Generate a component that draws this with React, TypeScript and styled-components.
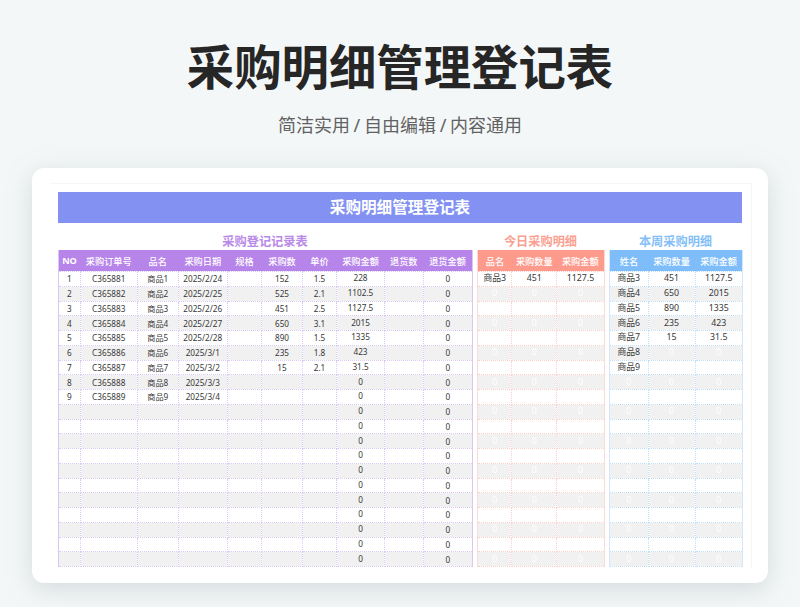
import React from "react";
import styled, { createGlobalStyle } from "styled-components";

const FONT = `"Noto Sans", "Noto Sans CJK SC", sans-serif`;

type Tint = { head: string; title: string; line: string; edge: string };

const PURPLE: Tint = { head: "#b784ea", title: "#b98ae8", line: "#dccbf5", edge: "#d9c8f3" };
const RED: Tint = { head: "#fe9a8c", title: "#fb9f92", line: "#fbd0ca", edge: "#fcdad6" };
const BLUE: Tint = { head: "#7ebdfa", title: "#85bff7", line: "#c2dff8", edge: "#d5e7f9" };

const ROW_COUNT = 20;

const purchases = [
  ["1", "C365881", "商品1", "2025/2/24", "", "152", "1.5", "228", "", "0"],
  ["2", "C365882", "商品2", "2025/2/25", "", "525", "2.1", "1102.5", "", "0"],
  ["3", "C365883", "商品3", "2025/2/26", "", "451", "2.5", "1127.5", "", "0"],
  ["4", "C365884", "商品4", "2025/2/27", "", "650", "3.1", "2015", "", "0"],
  ["5", "C365885", "商品5", "2025/2/28", "", "890", "1.5", "1335", "", "0"],
  ["6", "C365886", "商品6", "2025/3/1", "", "235", "1.8", "423", "", "0"],
  ["7", "C365887", "商品7", "2025/3/2", "", "15", "2.1", "31.5", "", "0"],
  ["8", "C365888", "商品8", "2025/3/3", "", "", "", "0", "", "0"],
  ["9", "C365889", "商品9", "2025/3/4", "", "", "", "0", "", "0"],
];

const today = [["商品3", "451", "1127.5"]];

const week = [
  ["商品3", "451", "1127.5"],
  ["商品4", "650", "2015"],
  ["商品5", "890", "1335"],
  ["商品6", "235", "423"],
  ["商品7", "15", "31.5"],
  ["商品8", "0", "0"],
  ["商品9", "0", "0"],
];

const GlobalStyle = createGlobalStyle`
  html, body {
    margin: 0;
    padding: 0;
    background: #f4f7f8;
  }
  body {
    font-family: ${FONT};
  }
`;

const Page = styled.div`
  width: 800px;
  height: 607px;
  overflow: hidden;
  display: flex;
  flex-direction: column;
  align-items: center;
`;

const Heading = styled.h1`
  margin: 33px 0 0;
  height: 68px;
  font-size: 47.4px;
  line-height: 68px;
  font-weight: 700;
  color: #262626;
`;

const Subheading = styled.div`
  margin-top: 10px;
  height: 28px;
  font-size: 18px;
  line-height: 28px;
  word-spacing: -1px;
  color: #626262;
`;

const Card = styled.div`
  margin-top: 29px;
  box-sizing: border-box;
  width: 736px;
  height: 415px;
  padding: 15px 16px 15px 18px;
  background: #fff;
  border-radius: 12px;
  box-shadow: 0 6px 24px rgba(150, 165, 165, 0.35);
`;

const Sheet = styled.div`
  box-sizing: border-box;
  height: 385px;
  padding: 8px 9px 0 8px;
  border-top: 1px solid #f6f6f6;
  border-right: 1px solid #f6f6f6;
`;

const Banner = styled.div`
  height: 31px;
  background: #8291f2;
  color: #fff;
  font-size: 15.6px;
  line-height: 31px;
  font-weight: 700;
  text-align: center;
`;

const Tables = styled.div`
  display: flex;
  justify-content: space-between;
`;

const Panel = styled.section<{ $width: number }>`
  width: ${(p) => p.$width}px;
`;

const PanelTitle = styled.div<{ $color: string }>`
  height: 27px;
  padding-top: 11px;
  box-sizing: border-box;
  font-size: 12.2px;
  line-height: 16px;
  font-weight: 700;
  text-align: center;
  color: ${(p) => p.$color};
`;

const Table = styled.table<{ $edge: string }>`
  width: 100%;
  table-layout: fixed;
  border-collapse: collapse;
  border-left: 1px solid ${(p) => p.$edge};
  border-right: 1px solid ${(p) => p.$edge};
`;

const HeadCell = styled.th<{ $bg: string; $strong: boolean }>`
  height: 21px;
  padding: 0;
  background: ${(p) => p.$bg};
  color: #fff;
  font-size: 9.2px;
  font-weight: ${(p) => (p.$strong ? 700 : 500)};
  white-space: nowrap;
  overflow: hidden;
`;

const Row = styled.tr<{ $even: boolean }>`
  height: 14.75px;
  background: ${(p) => (p.$even ? "#f1f1f1" : "#fff")};
`;

const Cell = styled.td<{ $line: string; $ghost: boolean; $raised: boolean; $size: number }>`
  padding: 0 0 ${(p) => (p.$raised ? 2 : 0)}px;
  border: 1px dotted ${(p) => p.$line};
  color: ${(p) => (p.$ghost ? "#fff" : "#383838")};
  font-size: ${(p) => p.$size}px;
  line-height: 11px;
  text-align: center;
  white-space: nowrap;
  overflow: hidden;
`;

type DetailProps = {
  title: string;
  tint: Tint;
  width: number;
  columns: { label: string; width: number }[];
  rows: string[][];
  filler: (index: number) => string[];
  textSize: number;
  raisedColumn?: number;
  isGhost?: (value: string) => boolean;
};

function Detail({
  title,
  tint,
  width,
  columns,
  rows,
  filler,
  textSize,
  raisedColumn,
  isGhost,
}: DetailProps) {
  const allRows = Array.from({ length: ROW_COUNT }, (_, i) => rows[i] ?? filler(i));
  return (
    <Panel $width={width}>
      <PanelTitle $color={tint.title}>{title}</PanelTitle>
      <Table $edge={tint.edge}>
        <colgroup>
          {columns.map((c) => (
            <col key={c.label} style={{ width: c.width }} />
          ))}
        </colgroup>
        <thead>
          <tr>
            {columns.map((c) => (
              <HeadCell key={c.label} $bg={tint.head} $strong={c.label === "NO"}>
                {c.label}
              </HeadCell>
            ))}
          </tr>
        </thead>
        <tbody>
          {allRows.map((row, r) => (
            <Row key={r} $even={r % 2 === 1}>
              {row.map((value, c) => (
                <Cell
                  key={c}
                  $line={tint.line}
                  $raised={c === raisedColumn}
                  $size={textSize}
                  $ghost={isGhost ? isGhost(value) : false}
                >
                  {value}
                </Cell>
              ))}
            </Row>
          ))}
        </tbody>
      </Table>
    </Panel>
  );
}

const purchaseColumns = [
  { label: "NO", width: 21.5 },
  { label: "采购订单号", width: 57.5 },
  { label: "品名", width: 40.5 },
  { label: "采购日期", width: 49.5 },
  { label: "规格", width: 34 },
  { label: "采购数", width: 41 },
  { label: "单价", width: 34 },
  { label: "采购金额", width: 48 },
  { label: "退货数", width: 38.5 },
  { label: "退货金额", width: 49.5 },
];

const todayColumns = [
  { label: "品名", width: 34 },
  { label: "采购数量", width: 45 },
  { label: "采购金额", width: 47.5 },
];

const weekColumns = [
  { label: "姓名", width: 38.5 },
  { label: "采购数量", width: 47 },
  { label: "采购金额", width: 47.5 },
];

const isZero = (value: string) => value === "0";

export default function App() {
  return (
    <Page>
      <GlobalStyle />
      <Heading>采购明细管理登记表</Heading>
      <Subheading>简洁实用 / 自由编辑 / 内容通用</Subheading>
      <Card>
        <Sheet>
          <Banner>采购明细管理登记表</Banner>
          <Tables>
            <Detail
              title="采购登记记录表"
              tint={PURPLE}
              width={414}
              columns={purchaseColumns}
              rows={purchases}
              filler={() => ["", "", "", "", "", "", "", "0", "", "0"]}
              textSize={8.2}
              raisedColumn={7}
            />
            <Detail
              title="今日采购明细"
              tint={RED}
              width={126.5}
              columns={todayColumns}
              rows={today}
              filler={() => ["0", "0", "0"]}
              textSize={8.8}
              isGhost={isZero}
            />
            <Detail
              title="本周采购明细"
              tint={BLUE}
              width={133}
              columns={weekColumns}
              rows={week}
              filler={() => ["0", "0", "0"]}
              textSize={8.8}
              isGhost={isZero}
            />
          </Tables>
        </Sheet>
      </Card>
    </Page>
  );
}
